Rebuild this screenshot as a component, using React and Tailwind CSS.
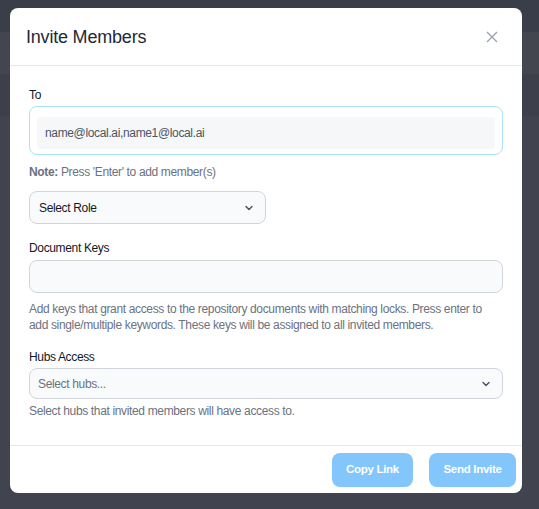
import React from "react";

function Chevron({ className }) {
  return (
    <svg className={className} width="12" height="12" viewBox="0 0 20 20" fill="none" stroke="currentColor" strokeWidth="2.4" strokeLinecap="round" strokeLinejoin="round">
      <path d="M5 7.5l5 5 5-5" />
    </svg>
  );
}

export default function App() {
  return (
    <div className="relative w-[539px] h-[509px] overflow-hidden bg-[#41444f] font-['Liberation_Sans',Arial,sans-serif] tracking-[-0.35px]">
      <div className="absolute inset-x-0 top-0 flex flex-col">
        <div className="h-[32px] bg-[#3a3e48]" />
        <div className="h-[42px] bg-[#43464f]" />
        <div className="h-[42px] bg-[#3d404a]" />
      </div>
      <div className="absolute left-[10px] top-[8px] w-[512px] h-[485px] bg-white rounded-lg flex flex-col">
        <div className="h-[58px] flex items-center justify-between pl-4 pr-[24px] border-b border-[#e5e7eb]">
          <h2 className="text-[18px] tracking-[-0.2px] text-[#1f2937] leading-7">Invite Members</h2>
          <svg width="12" height="12" viewBox="0 0 12 12" stroke="#9ca3af" strokeWidth="1.4" fill="none">
            <path d="M1 1l10 10M11 1L1 11" />
          </svg>
        </div>
        <div className="flex-1 px-[19px] pt-[21px]">
          <label className="block text-[12px] font-medium text-[#111827] leading-4">To</label>
          <div className="mt-[3px] h-[49px] rounded-lg border border-[#a8e3f6] px-[7px] py-[10px]">
            <div className="h-[32px] bg-[#f6f7f9] rounded px-[8px] flex items-center text-[12px] text-[#4b5563]">
              name@local.ai,name1@local.ai
            </div>
          </div>
          <p className="mt-[9px] text-[12px] text-[#6b7280] leading-4">
            <span className="font-bold">Note:</span> Press 'Enter' to add member(s)
          </p>
          <div className="mt-[11px] w-[237px] h-[33px] rounded-lg border border-[#d1d5db] bg-[#f9fafb] flex items-center justify-between pl-[9px] pr-[10px] text-[12px] text-[#111827]">
            <span>Select Role</span>
            <Chevron className="text-[#4b5563]" />
          </div>
          <label className="block mt-[16px] text-[12px] font-medium text-[#111827] leading-4">Document Keys</label>
          <div className="mt-[4px] h-[33px] rounded-lg border border-[#d1d5db] bg-[#f9fafb]" />
          <p className="mt-[8px] text-[12px] text-[#6b7280] leading-4">
            Add keys that grant access to the repository documents with matching locks. Press enter to add single/multiple keywords. These keys will be assigned to all invited members.
          </p>
          <label className="block mt-[16px] text-[12px] font-medium text-[#111827] leading-4">Hubs Access</label>
          <div className="mt-[3px] h-[31px] rounded-lg border border-[#d1d5db] bg-[#f9fafb] flex items-center justify-between pl-[8px] pr-[10px] text-[12px] text-[#6b7280]">
            <span>Select hubs...</span>
            <Chevron className="text-[#4b5563]" />
          </div>
          <p className="mt-[4px] text-[12px] text-[#6b7280] leading-4">Select hubs that invited members will have access to.</p>
        </div>
        <div className="h-[48px] border-t border-[#e5e7eb] flex items-center justify-end gap-4 pr-[6px]">
          <button className="w-[81px] h-[34px] rounded-lg bg-[#82c6fc] text-white text-[11.5px] font-bold tracking-[-0.3px]">Copy Link</button>
          <button className="w-[87px] h-[34px] rounded-lg bg-[#82c6fc] text-white text-[11.5px] font-bold tracking-[-0.3px]">Send Invite</button>
        </div>
      </div>
    </div>
  );
}
